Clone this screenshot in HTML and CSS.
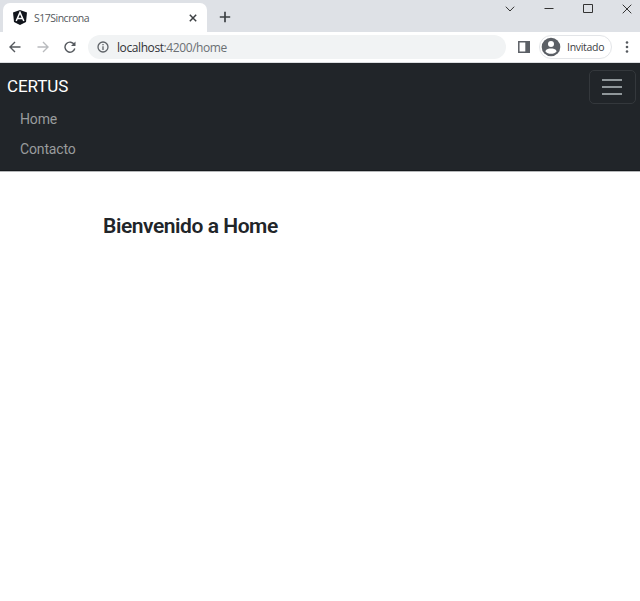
FILE: index.html
```html
<!DOCTYPE html>
<html lang="es">
<head>
<meta charset="utf-8">
<title>S17Sincrona</title>
<link rel="stylesheet" href="styles.css">
</head>
<body>
<div class="tabstrip">
  <div class="tab">
    <svg class="favicon" width="14" height="15" viewBox="0 0 14 15"><path d="M7 0L14 2.5L13 12L7 15L1 12L0 2.5Z" fill="#11151c"/><path d="M3.2 11L7 2.4L10.8 11M4.8 8.5H9.2" fill="none" stroke="#fff" stroke-width="1.5"/></svg>
    <span class="tab-title">S17Sincrona</span>
    <svg class="tab-close" width="8" height="8" viewBox="0 0 8 8"><path d="M.8.8L7.2 7.2M7.2.8L.8 7.2" stroke="#3c4043" stroke-width="1.5"/></svg>
  </div>
  <svg class="new-tab" width="12" height="12" viewBox="0 0 12 12"><path d="M6 .8V11.2M.8 6H11.2" stroke="#3c4043" stroke-width="1.7"/></svg>
  <div class="window-controls">
    <svg width="10" height="10" viewBox="0 0 10 10"><path d="M.8 2.7L5 7L9.2 2.7"/></svg>
    <svg width="10" height="10" viewBox="0 0 10 10"><path d="M.5 4.5H9.5"/></svg>
    <svg width="10" height="10" viewBox="0 0 10 10"><path d="M.5.5H9.5V8.5H.5Z"/></svg>
    <svg width="10" height="10" viewBox="0 0 10 10"><path d="M.7.7L9.3 9.3M9.3.7L.7 9.3"/></svg>
  </div>
</div>
<div class="toolbar">
  <svg class="nav-icon" width="12" height="12" viewBox="0 0 12 12"><path d="M11.5 6H1M6 1L1 6L6 11" fill="none" stroke="#55595e" stroke-width="1.4"/></svg>
  <svg class="nav-icon forward" width="12" height="12" viewBox="0 0 12 12"><path d="M.5 6H11M6 1L11 6L6 11" fill="none" stroke="#b9bbbe" stroke-width="1.4"/></svg>
  <svg class="nav-icon reload" width="12" height="12" viewBox="0 0 12 12"><path d="M10.4 3.8A5 5 0 1 0 10.8 7.5" fill="none" stroke="#55595e" stroke-width="1.4"/><path d="M11.5 .5V5H7Z" fill="#55595e"/></svg>
  <div class="address">
    <svg width="12" height="12" viewBox="0 0 12 12"><circle cx="6" cy="6" r="5" fill="none" stroke="#5f6368" stroke-width="1.3"/><path d="M6 5.2V9M6 2.9V4.2" stroke="#5f6368" stroke-width="1.3"/></svg>
    <span class="url"><span class="host">localhost</span>:4200/home</span>
  </div>
  <svg class="panel" width="12" height="12" viewBox="0 0 12 12"><path d="M.8.8H11.2V11.2H.8Z" fill="none" stroke="#5b5f65" stroke-width="1.5"/><path d="M7.3 0H12V12H7.3Z" fill="#5b5f65"/></svg>
  <div class="profile">
    <svg width="20" height="20" viewBox="0 0 20 20"><circle cx="10" cy="10" r="9.3" fill="#5b5f65"/><circle cx="10" cy="7" r="3" fill="#fff"/><path d="M4.3 14.2C5.2 11.7 8 11.4 10 11.4S14.8 11.7 15.7 14.2C14.4 16 12.2 16.8 10 16.8S5.6 16 4.3 14.2Z" fill="#fff"/></svg>
    <span>Invitado</span>
  </div>
  <svg class="more" width="4" height="12" viewBox="0 0 4 12" fill="#55595e"><circle cx="2" cy="1.5" r="1.3"/><circle cx="2" cy="6" r="1.3"/><circle cx="2" cy="10.5" r="1.3"/></svg>
</div>
<nav class="navbar">
  <div class="navbar-top">
    <a class="brand">CERTUS</a>
    <button class="toggler" aria-label="Menu"><span></span><span></span><span></span></button>
  </div>
  <ul class="links">
    <li>Home</li>
    <li>Contacto</li>
  </ul>
</nav>
<main>
  <h1>Bienvenido a Home</h1>
</main>
</body>
</html>
```
FILE: styles.css
```css
* { box-sizing: border-box; }
body {
  margin: 0;
  height: 601px;
  overflow: hidden;
  background: #fff;
  color: #212529;
  font-family: Roboto, sans-serif;
}
svg { display: block; flex: none; }

.tabstrip {
  display: flex;
  height: 32px;
  padding-left: 3px;
  background: #dee1e6;
}
.tab {
  display: flex;
  align-items: center;
  width: 204px;
  height: 29px;
  margin-top: 3px;
  padding: 0 10px;
  border-radius: 7px 7px 0 0;
  background: #fff;
}
.tab-title {
  margin-left: 7px;
  color: #55595d;
  font: 10.5px/14px "Open Sans", sans-serif;
  letter-spacing: -0.5px;
}
.tab-close { margin-left: auto; }
.new-tab { margin: 11px 0 0 12px; }
.window-controls {
  display: flex;
  gap: 29px;
  margin: 4px 8px 0 auto;
  fill: none;
  stroke: #333;
  stroke-width: 1;
}

.toolbar {
  display: flex;
  align-items: center;
  height: 31px;
  padding-left: 9px;
  background: #fff;
  border-bottom: 1px solid #dcdee1;
}
.forward { margin-left: 16px; }
.reload { margin-left: 15px; }
.address {
  display: flex;
  align-items: center;
  width: 418px;
  height: 24px;
  margin-left: 12px;
  padding-left: 9px;
  border-radius: 12px;
  background: #f1f3f4;
}
.url {
  margin: 1px 0 0 8px;
  color: #6b6f73;
  font: 12px/16px "Open Sans", sans-serif;
  letter-spacing: -0.41px;
}
.host { color: #303236; }
.panel { margin-left: 12px; }
.profile {
  display: flex;
  align-items: center;
  width: 73px;
  height: 24px;
  margin-left: 9px;
  padding-left: 1px;
  border: 1px solid #e3e5e8;
  border-radius: 12px;
  color: #3c4043;
  font: 10.5px/14px "Open Sans", sans-serif;
  letter-spacing: -0.3px;
}
.profile span { margin-left: 6px; }
.more { margin-left: 13px; }

.navbar {
  height: 108px;
  padding: 7px 4px 0 7px;
  background: #212529;
  border-bottom: 1px solid #15191c;
}
.navbar-top {
  display: flex;
  justify-content: space-between;
}
.brand {
  color: #fff;
  font-size: 17px;
  line-height: 32px;
  letter-spacing: -0.1px;
}
.toggler {
  display: flex;
  flex-direction: column;
  align-items: center;
  justify-content: center;
  gap: 5px;
  width: 47px;
  height: 34px;
  padding: 0 1px 0 0;
  border: 1px solid #34383c;
  border-radius: 5px;
  background: none;
}
.toggler span {
  width: 20px;
  height: 2px;
  background: #90979a;
}
.links {
  margin: 0;
  padding: 0 0 0 13px;
  list-style: none;
  color: #999c9d;
  font-size: 14px;
  line-height: 30px;
  letter-spacing: -0.15px;
}

main {
  padding: 39px 0 0 103px;
  border-top: 1px solid #b5b7b9;
}
h1 {
  margin: 0;
  font-size: 21px;
  line-height: 30px;
  font-weight: 600;
  letter-spacing: -0.45px;
}
```
